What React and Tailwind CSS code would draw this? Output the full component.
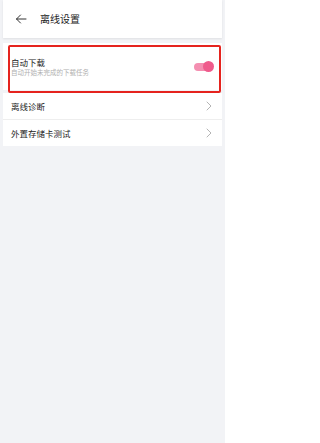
import React from "react";

const font = { fontFamily: '"Noto Sans CJK SC", "Noto Sans", sans-serif' };

function Chevron() {
  return (
    <svg width="6" height="10" viewBox="0 0 6 10" fill="none">
      <path d="M1 1l4 4-4 4" stroke="#ababab" strokeWidth="0.9" strokeLinecap="round" strokeLinejoin="round" />
    </svg>
  );
}

export default function App() {
  return (
    <div className="relative w-[225px] h-[443px] bg-[#f2f3f6] overflow-hidden" style={font}>
      <div className="mx-[3px] h-[38px] bg-white flex items-center shadow-[0_1px_2px_rgba(0,0,0,0.08)]">
        <svg className="ml-[12px]" width="12" height="10" viewBox="0 0 12 10" fill="none">
          <path d="M11 5H1.5M5.5 1L1.5 5l4 4" stroke="#333" strokeWidth="1" strokeLinecap="round" strokeLinejoin="round" />
        </svg>
        <span className="ml-[13px] text-[10px] leading-none text-[#222]">离线设置</span>
      </div>

      <div className="mx-[3px] mt-[5px] h-[47px] bg-white flex items-center pl-[8px] pr-[9px]">
        <div className="flex-1 flex flex-col">
          <span className="text-[8.5px] leading-[11px] text-[#222]">自动下载</span>
          <span className="text-[6.5px] leading-[9px] text-[#b0b0b0]">自动开始未完成的下载任务</span>
        </div>
        <div className="relative w-[19px] h-[8px] rounded-full bg-[#f48fb1]">
          <div className="absolute right-[-1px] top-[-2px] w-[11px] h-[11px] rounded-full bg-[#ef5b8c]" />
        </div>
      </div>

      <div className="mx-[3px] mt-[3px] bg-white flex flex-col">
        <div className="h-[27px] flex items-center justify-between pl-[8px] pr-[10px] border-b border-[#eeeeee]">
          <span className="text-[8.5px] text-[#222]">离线诊断</span>
          <Chevron />
        </div>
        <div className="h-[26px] flex items-center justify-between pl-[8px] pr-[10px]">
          <span className="text-[8.5px] text-[#222]">外置存储卡测试</span>
          <Chevron />
        </div>
      </div>

      <div className="absolute left-[8px] top-[45px] w-[213px] h-[48px] border-2 border-[#e5231e] rounded-[2px]" />
    </div>
  );
}
